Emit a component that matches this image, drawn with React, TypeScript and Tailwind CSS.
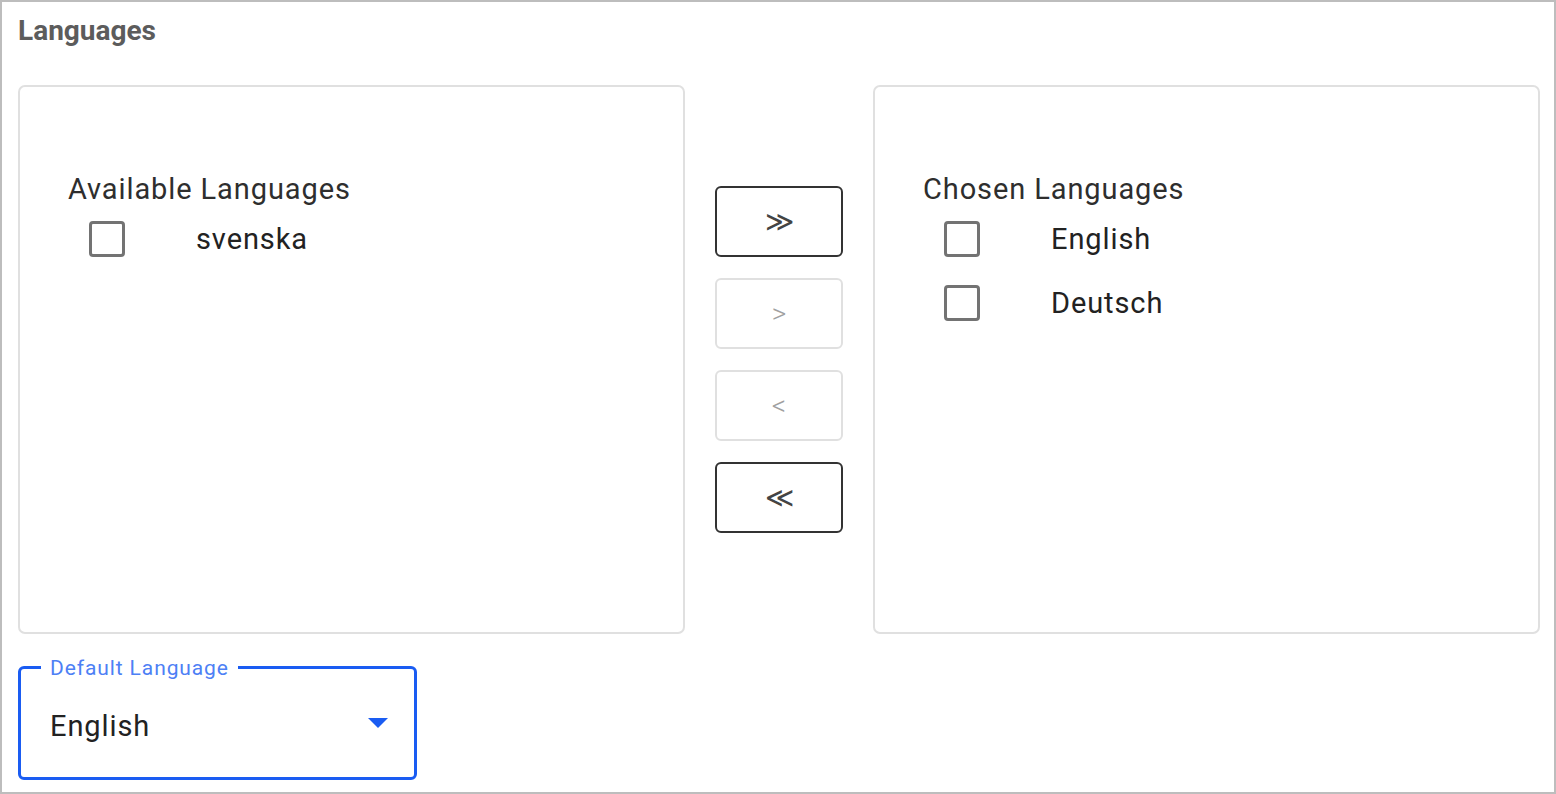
import React from "react";

const font = { fontFamily: "Roboto, 'Noto Sans', sans-serif" };

function Checkbox() {
  return <div className="w-[36px] h-[36px] border-[3px] border-[#737373] rounded-[4px] shrink-0" />;
}

function Item({ label }: { label: string }) {
  return (
    <div className="flex items-center h-[64px] pl-[21px]">
      <Checkbox />
      <span className="ml-[71px] text-[29px] leading-none text-[#222] tracking-[0.9px]">{label}</span>
    </div>
  );
}

function Panel({ title, items }: { title: string; items: string[] }) {
  return (
    <div className="w-[667px] h-[549px] border-2 border-[#e0e0e0] rounded-[7px] pt-[84px] pl-[48px] shrink-0">
      <div className="text-[29px] leading-[36px] text-[#2e2e2e] tracking-[0.9px]">{title}</div>
      {items.map((i) => (
        <Item key={i} label={i} />
      ))}
    </div>
  );
}

function Btn({ label, enabled }: { label: string; enabled: boolean }) {
  return (
    <div
      className={
        "w-[128px] h-[71px] rounded-[6px] border-2 flex items-center justify-center text-[28px] font-light leading-none " +
        (enabled ? "border-[#333] text-[#444]" : "border-[#e0e0e0] text-[#a0a0a0]")
      }
    >
      {label}
    </div>
  );
}

export default function App() {
  return (
    <div style={font} className="w-[1556px] h-[794px] border-2 border-[#bdbdbd] bg-white pl-[16px] overflow-hidden">
      <div className="text-[28px] font-bold text-[#5c5c5c] leading-none pt-[15px]">Languages</div>
      <div className="flex items-center mt-[40px]">
        <Panel title="Available Languages" items={["svenska"]} />
        <div className="flex flex-col gap-[21px] mx-[30px] w-[128px]">
          <Btn label="≫" enabled />
          <Btn label=">" enabled={false} />
          <Btn label="<" enabled={false} />
          <Btn label="≪" enabled />
        </div>
        <Panel title="Chosen Languages" items={["English", "Deutsch"]} />
      </div>
      <div className="relative mt-[32px] w-[399px] h-[114px] border-[3px] border-[#1a5cf2] rounded-[6px] flex items-center pl-[29px] pr-[26px]">
        <span className="absolute left-[20px] top-[-11px] px-[9px] bg-white text-[21px] leading-none text-[#4d80f5] tracking-[0.9px]">
          Default Language
        </span>
        <span className="text-[29px] leading-none text-[#222] flex-1 mt-[6px] tracking-[0.9px]">English</span>
        <svg width="20" height="10" viewBox="0 0 20 10" className="mb-[1px]">
          <polygon points="0,0 20,0 10,10" fill="#1a5cf2" />
        </svg>
      </div>
    </div>
  );
}
